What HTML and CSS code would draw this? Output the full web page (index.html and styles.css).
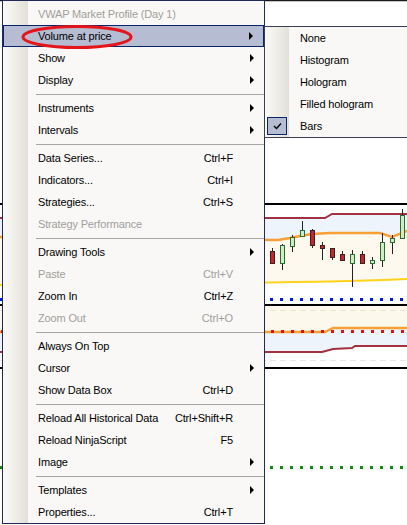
FILE: index.html
```html
<!DOCTYPE html>
<html>
<head>
<meta charset="utf-8">
<link rel="stylesheet" href="styles.css">
</head>
<body>
<div class="screen">
  <svg class="chart" width="407" height="525" viewBox="0 0 407 525">
    <rect x="0" y="0" width="407" height="525" fill="#ffffff"/>
    <line x1="0" y1="0.5" x2="407" y2="0.5" stroke="#1a1a1a" stroke-width="1.5"/>
    <!-- upper band -->
    <polygon points="0,218 325,218 332,214 407,214 407,231 392,237 380,233 330,233 312,234 300,236 290,238 278,240 0,237" fill="#eef4fb"/>
    <polygon points="0,237 278,240 290,238 300,236 312,234 330,233 380,233 392,237 407,231 407,280 0,285" fill="#fdf9ee"/>
    <line x1="0" y1="204" x2="407" y2="204" stroke="#000" stroke-width="2"/>
    <polyline points="0,218 325,218 332,214 407,214" fill="none" stroke="#a3303f" stroke-width="2"/>
    <polyline points="0,237 278,240 290,238 300,236 312,234 330,233 380,233 392,237 407,231" fill="none" stroke="#f7a035" stroke-width="2.5"/>
    <path d="M0 285 Q 330 283 407 279" fill="none" stroke="#ffd21c" stroke-width="2"/>
    <!-- candles -->
    <g stroke="#222" stroke-width="1">
      <line x1="272.5" y1="248" x2="272.5" y2="264"/>
      <line x1="282.5" y1="244" x2="282.5" y2="270"/>
      <line x1="292.5" y1="235" x2="292.5" y2="252"/>
      <line x1="302.5" y1="221" x2="302.5" y2="237"/>
      <line x1="312.5" y1="229" x2="312.5" y2="248"/>
      <line x1="322.5" y1="242" x2="322.5" y2="260"/>
      <line x1="332.5" y1="248" x2="332.5" y2="260"/>
      <line x1="342.5" y1="251" x2="342.5" y2="261"/>
      <line x1="352.5" y1="250" x2="352.5" y2="287"/>
      <line x1="362.5" y1="251" x2="362.5" y2="264"/>
      <line x1="372.5" y1="257" x2="372.5" y2="269"/>
      <line x1="382.5" y1="233" x2="382.5" y2="267"/>
      <line x1="392.5" y1="235" x2="392.5" y2="254"/>
      <line x1="402.5" y1="209" x2="402.5" y2="239"/>
    </g>
    <g stroke="#3a2020" stroke-width="1" fill="#c0282c">
      <rect x="270.5" y="251.5" width="4" height="12"/>
      <rect x="310.5" y="230.5" width="4" height="15"/>
      <rect x="320.5" y="245.5" width="4" height="3"/>
      <rect x="330.5" y="248.5" width="4" height="9"/>
      <rect x="340.5" y="254.5" width="4" height="6"/>
      <rect x="360.5" y="254.5" width="4" height="9"/>
    </g>
    <g stroke="#2f6a2f" stroke-width="1" fill="#cdeec4">
      <rect x="280.5" y="245.5" width="4" height="18"/>
      <rect x="290.5" y="237.5" width="4" height="9"/>
      <rect x="300.5" y="230.5" width="4" height="6"/>
      <rect x="350.5" y="254.5" width="4" height="9"/>
      <rect x="370.5" y="260.5" width="4" height="3"/>
      <rect x="380.5" y="242.5" width="4" height="18"/>
      <rect x="390.5" y="238.5" width="4" height="4"/>
      <rect x="400.5" y="215.5" width="4" height="23"/>
    </g>
    <!-- blue dots -->
    <line x1="0" y1="299.5" x2="407" y2="299.5" stroke="#0018e0" stroke-width="3" stroke-dasharray="3 7"/>
    <line x1="0" y1="305" x2="407" y2="305" stroke="#000" stroke-width="2"/>
    <!-- lower band -->
    <polygon points="0,306 407,306 407,328 333,328 325,332 0,332" fill="#fcf8ec"/>
    <polygon points="0,332 325,332 333,328 407,328 407,346 355,346 352,348 333,349 322,352 0,352" fill="#eef4fb"/>
    <line x1="0" y1="310.5" x2="407" y2="310.5" stroke="#ebe5d4" stroke-width="1" stroke-dasharray="6 4"/>
    <polyline points="0,332 325,332 333,328 407,328" fill="none" stroke="#f7a035" stroke-width="2.5"/>
    <line x1="0" y1="331.5" x2="407" y2="331.5" stroke="#e01010" stroke-width="3" stroke-dasharray="3 7" stroke-dashoffset="-1"/>
    <polyline points="0,352 322,352 333,349 352,348 355,346 407,346" fill="none" stroke="#a3303f" stroke-width="2"/>
    <line x1="0" y1="360.5" x2="407" y2="360.5" stroke="#e6e6ea" stroke-width="1" stroke-dasharray="6 4"/>
    <line x1="0" y1="368" x2="407" y2="368" stroke="#000" stroke-width="2"/>
    <!-- green dots -->
    <line x1="0" y1="467.5" x2="407" y2="467.5" stroke="#108a10" stroke-width="3" stroke-dasharray="3 7"/>
  </svg>

  <div class="menu">
    <div class="item disabled"><span class="label">VWAP Market Profile (Day 1)</span><span class="key"></span><span class="sub"></span></div>
    <div class="item hot"><span class="label">Volume at price</span><span class="key"></span><span class="sub"><i class="arrow"></i></span></div>
    <div class="item"><span class="label">Show</span><span class="key"></span><span class="sub"><i class="arrow"></i></span></div>
    <div class="item"><span class="label">Display</span><span class="key"></span><span class="sub"><i class="arrow"></i></span></div>
    <div class="sep"></div>
    <div class="item"><span class="label">Instruments</span><span class="key"></span><span class="sub"><i class="arrow"></i></span></div>
    <div class="item"><span class="label">Intervals</span><span class="key"></span><span class="sub"><i class="arrow"></i></span></div>
    <div class="sep"></div>
    <div class="item"><span class="label">Data Series...</span><span class="key">Ctrl+F</span><span class="sub"></span></div>
    <div class="item"><span class="label">Indicators...</span><span class="key">Ctrl+I</span><span class="sub"></span></div>
    <div class="item"><span class="label">Strategies...</span><span class="key">Ctrl+S</span><span class="sub"></span></div>
    <div class="item disabled"><span class="label">Strategy Performance</span><span class="key"></span><span class="sub"></span></div>
    <div class="sep"></div>
    <div class="item"><span class="label">Drawing Tools</span><span class="key"></span><span class="sub"><i class="arrow"></i></span></div>
    <div class="item disabled"><span class="label">Paste</span><span class="key">Ctrl+V</span><span class="sub"></span></div>
    <div class="item"><span class="label">Zoom In</span><span class="key">Ctrl+Z</span><span class="sub"></span></div>
    <div class="item disabled"><span class="label">Zoom Out</span><span class="key">Ctrl+O</span><span class="sub"></span></div>
    <div class="sep"></div>
    <div class="item"><span class="label">Always On Top</span><span class="key"></span><span class="sub"></span></div>
    <div class="item"><span class="label">Cursor</span><span class="key"></span><span class="sub"><i class="arrow"></i></span></div>
    <div class="item"><span class="label">Show Data Box</span><span class="key">Ctrl+D</span><span class="sub"></span></div>
    <div class="sep"></div>
    <div class="item"><span class="label">Reload All Historical Data</span><span class="key">Ctrl+Shift+R</span><span class="sub"></span></div>
    <div class="item"><span class="label">Reload NinjaScript</span><span class="key">F5</span><span class="sub"></span></div>
    <div class="item"><span class="label">Image</span><span class="key"></span><span class="sub"><i class="arrow"></i></span></div>
    <div class="sep"></div>
    <div class="item"><span class="label">Templates</span><span class="key"></span><span class="sub"><i class="arrow"></i></span></div>
    <div class="item"><span class="label">Properties...</span><span class="key">Ctrl+T</span><span class="sub"></span></div>
  </div>

  <svg class="circle" width="112" height="26" viewBox="0 0 112 26">
    <ellipse cx="56" cy="13" rx="54" ry="10.5" fill="none" stroke="#e5161b" stroke-width="3"/>
  </svg>

  <div class="submenu">
    <div class="sitem"><span class="check"></span><span class="slabel">None</span></div>
    <div class="sitem"><span class="check"></span><span class="slabel">Histogram</span></div>
    <div class="sitem"><span class="check"></span><span class="slabel">Hologram</span></div>
    <div class="sitem"><span class="check"></span><span class="slabel">Filled hologram</span></div>
    <div class="sitem"><span class="check on"><svg width="9" height="8" viewBox="0 0 9 8"><path d="M1 4 L3.5 6.5 L8 1.5" fill="none" stroke="#000" stroke-width="1.4"/></svg></span><span class="slabel">Bars</span></div>
  </div>
</div>
</body>
</html>
```

FILE: styles.css
```css
html, body {
  margin: 0;
  padding: 0;
  background: #ffffff;
}
.screen {
  position: relative;
  width: 407px;
  height: 525px;
  overflow: hidden;
  font-family: "Liberation Sans", Arial, sans-serif;
  font-size: 11px;
  letter-spacing: -0.15px;
  color: #000;
}
.chart {
  display: block;
}
.menu {
  position: absolute;
  left: 2px;
  top: 0;
  width: 261px;
  border: 1px solid #1f2a55;
  padding-top: 2px;
  background: linear-gradient(to right, #fbfaf7 0px, #e2e0d8 25px, #f9f8f6 25px);
  box-sizing: content-box;
}
.item {
  height: 22px;
  display: grid;
  grid-template-columns: 1fr auto 31px;
  align-items: center;
  padding-left: 35px;
  box-sizing: border-box;
}
.item.hot {
  background: #b6bdd2;
  border: 1px solid #0a246a;
  padding-left: 34px;
}
.item.disabled {
  color: #a09f9c;
}
.label {
  white-space: nowrap;
}
.key {
  white-space: nowrap;
  text-align: right;
}
.sub {
  display: flex;
  align-items: center;
  padding-left: 17px;
  height: 100%;
}
.arrow {
  display: block;
  width: 0;
  height: 0;
  border-left: 4px solid #000;
  border-top: 4px solid transparent;
  border-bottom: 4px solid transparent;
}
.sep {
  height: 6px;
  padding-top: 3px;
  padding-left: 33px;
  box-sizing: border-box;
}
.sep::before {
  content: "";
  display: block;
  height: 1px;
  background: #a7a6a2;
}
.circle {
  position: absolute;
  left: 21px;
  top: 24px;
}
.submenu {
  position: absolute;
  left: 264px;
  top: 26px;
  width: 160px;
  border: 1px solid #3a3f55;
  background: linear-gradient(to right, #fbfaf7 0px, #e2e0d8 24px, #f9f8f6 24px);
}
.sitem {
  height: 22px;
  display: flex;
  align-items: center;
}
.check {
  width: 20px;
  height: 18px;
  margin-left: 2px;
  margin-right: 13px;
  box-sizing: border-box;
  display: flex;
  align-items: center;
  justify-content: center;
}
.check.on {
  background: #b6bdd2;
  border: 1px solid #0a246a;
}
.slabel {
  white-space: nowrap;
}
```
